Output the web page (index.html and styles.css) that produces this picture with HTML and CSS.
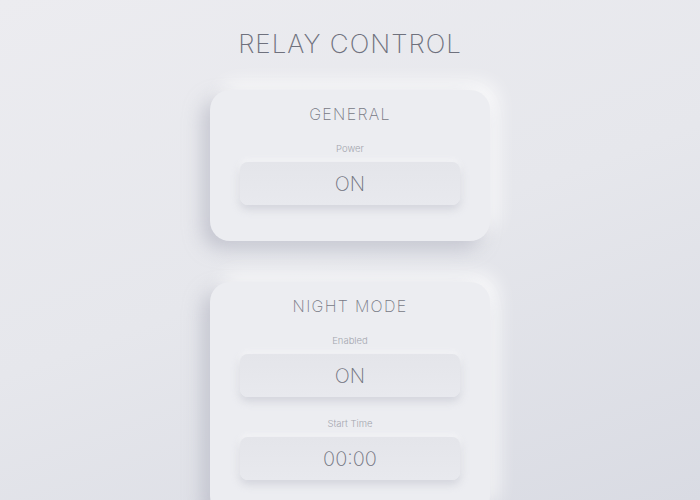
FILE: index.html
```html
<!DOCTYPE html>
<html lang="en">
<head>
<meta charset="utf-8">
<title>Relay Control</title>
<link rel="stylesheet" href="styles.css">
</head>
<body>
<main class="page">
  <h1 class="page-title">RELAY CONTROL</h1>
  <section class="card">
    <h2 class="card-title">GENERAL</h2>
    <div class="field">
      <div class="field-label">Power</div>
      <button class="toggle">ON</button>
    </div>
  </section>
  <section class="card">
    <h2 class="card-title">NIGHT MODE</h2>
    <div class="field">
      <div class="field-label">Enabled</div>
      <button class="toggle">ON</button>
    </div>
    <div class="field">
      <div class="field-label">Start Time</div>
      <button class="toggle">00:00</button>
    </div>
  </section>
</main>
</body>
</html>
```
FILE: styles.css
```css
html, body {
  margin: 0;
  padding: 0;
}
body {
  min-height: 100vh;
  background: linear-gradient(160deg, #ececf0 0%, #e6e7ec 50%, #d9dbe3 100%);
  background-attachment: fixed;
  font-family: Inter, "Liberation Sans", sans-serif;
  font-weight: 200;
  color: #7c7e8a;
  overflow: hidden;
}
.page {
  display: flex;
  flex-direction: column;
  align-items: center;
  padding-top: 28px;
}
.page-title {
  margin: 0 0 30px;
  font-size: 26px;
  line-height: 32px;
  font-weight: 200;
  letter-spacing: 1px;
  color: #6f717d;
}
.card {
  box-sizing: border-box;
  width: 280px;
  padding: 14px 30px 36px;
  margin-bottom: 41px;
  border-radius: 20px;
  background: #ecedf1;
  box-shadow: -8px 8px 18px rgba(170, 172, 186, 0.55), 8px -8px 18px rgba(255, 255, 255, 0.8);
  display: flex;
  flex-direction: column;
  align-items: stretch;
}
.card-title {
  margin: 0 0 19px;
  text-align: center;
  font-size: 16px;
  line-height: 20px;
  font-weight: 200;
  letter-spacing: 1.3px;
  color: #777985;
}
.field {
  display: flex;
  flex-direction: column;
  align-items: stretch;
}
.field + .field {
  margin-top: 21px;
}
.field-label {
  text-align: center;
  font-size: 9.5px;
  line-height: 12px;
  font-weight: 300;
  color: #a3a5ae;
  margin-bottom: 7px;
}
.toggle {
  height: 43px;
  border: none;
  border-radius: 8px;
  background: linear-gradient(180deg, #e4e5ea 0%, #e8e9ee 100%);
  box-shadow: 0 4px 8px rgba(175, 177, 190, 0.45), 0 -2px 6px rgba(255, 255, 255, 0.7);
  font-family: Inter, "Liberation Sans", sans-serif;
  font-weight: 200;
  font-size: 20px;
  color: #72747f;
  padding: 0;
}
```
